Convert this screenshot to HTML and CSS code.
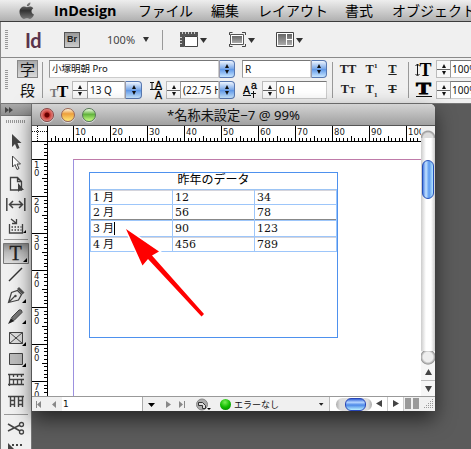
FILE: index.html
```html
<!DOCTYPE html>
<html lang="ja">
<head>
<meta charset="utf-8">
<title>InDesign</title>
<link rel="stylesheet" href="styles.css">
</head>
<body>
<div class="screen">
  <header class="menubar">
    <svg class="apple" width="16" height="18" viewBox="0 0 16 18"><defs><linearGradient id="ap" x2="0" y2="1"><stop stop-color="#888"/><stop offset=".5" stop-color="#333"/><stop offset="1" stop-color="#777"/></linearGradient></defs><path fill="url(#ap)" d="M8 5.2C10 4 13 4 14.3 6.2C11.7 7.8 12 11.2 15 12.5C14.2 14.8 12.5 17 11 17C9.800 17 9.300 16.300 8 16.300C6.700 16.300 6 17 5 17C2.800 17 .5 13 .5 10C.5 5.500 4.500 3.500 8 5.200ZM7.800 4.300C7.800 2 9.500.6 11.500.4C11.600 2.500 10 4.300 7.800 4.300Z"/></svg>
    <b class="app">InDesign</b>
    <span class="m1">ファイル</span><span class="m2">編集</span><span class="m3">レイアウト</span><span class="m4">書式</span><span class="m5">オブジェクト</span>
  </header>

  <div class="appbar">
    <i class="grip"></i>
    <b class="id">Id</b>
    <b class="br">Br</b>
    <span class="zoom">100%</span><i class="tri"></i>
    <i class="sep"></i>
    <svg class="view1" width="28" height="16" viewBox="181 32 28 16"><defs><linearGradient id="g" x2="0" y2="1"><stop stop-color="#666"/><stop offset="1" stop-color="#aaa"/></linearGradient></defs><path fill="#555" d="M181 32h18v4h-14v11h-4z"/><path stroke="#ccc" d="M183.500 32v2M186.500 32v2M189.500 32v2M192.500 32v2M195.500 32v2M181 37.500h2M181 40.500h2M181 43.500h2"/><path fill="#fff" stroke="#444" d="M185.500 36.500h13v10h-13z"/><path fill="#333" d="M201 38h7l-3.500 5z"/></svg>
    <svg class="view2" width="27" height="16" viewBox="230 32 27 16"><path fill="none" stroke="#444" d="M230.500 35v-2.500h3M243 32.500h3.500V35M230.500 44v2.500h3M243 46.500h3.500V44"/><path fill="#fff" stroke="#555" d="M231.500 34.500h13v10h-13z"/><path fill="url(#g)" d="M233 36h10v7h-10z"/><path fill="#333" d="M249 38h7l-3.500 5z"/></svg>
    <svg class="view3" width="28" height="16" viewBox="277 32 28 16"><path fill="#fff" stroke="#444" d="M277.500 32.500h17v14h-17z"/><path fill="url(#g)" d="M279 34h8v11h-8zM288 34h5v5h-5zM288 40h5v5h-5z"/><path fill="#333" d="M297 38h7l-3.500 5z"/></svg>
  </div>

  <div class="control">
    <i class="grip"></i>
    <div class="modes"><span class="on">字</span><span>段</span></div>
    <i class="sep"></i>
    <div class="fields left">
      <div class="row"><span class="input family">小塚明朝 Pro</span><i class="pop"></i></div>
      <div class="row">
        <svg class="ic" width="23" height="18" viewBox="49 82 23 18"><g font-family="Liberation Serif" font-weight="700"><text x="50" y="98" font-size="12" fill="#777">T</text><text x="57" y="98" font-size="17">T</text></g></svg>
        <i class="step"></i><span class="input size">13 Q</span><i class="pop"></i>
        <svg class="ic" width="24" height="18" viewBox="142 82 24 18"><g font-family="Liberation Sans" font-size="10.500" stroke="#000" stroke-width=".3"><text x="155" y="90">A</text><text x="155" y="100">A</text></g><path fill="none" stroke="#111" d="M150 83.500h4M150 90.500h12M152 83v8"/></svg>
        <i class="step"></i><span class="input lead">(22.75 H</span><i class="pop"></i>
      </div>
    </div>
    <div class="fields mid">
      <div class="row"><span class="input style">R</span><i class="pop"></i></div>
      <div class="row">
        <svg class="ic" width="20" height="18" viewBox="242 82 20 18"><g font-family="Liberation Sans" font-size="10.500" stroke="#000" stroke-width=".3"><text x="243" y="95">A</text><text x="251" y="90">a</text></g><path fill="none" stroke="#111" d="M243 96.500h8M253.500 92v7M251 94.500h5"/></svg>
        <i class="step"></i><span class="input shift">0 H</span>
      </div>
    </div>
    <i class="sep s2"></i>
    <div class="caps">
      <span>TT</span><span>T<sup>1</sup></span><span><u>T</u></span>
      <span>T<small>T</small></span><span>T<sub>1</sub></span><span><s>T</s></span>
    </div>
    <i class="sep s3"></i>
    <div class="fields right">
      <div class="row"><svg class="ic" width="22" height="18" viewBox="412 61 22 18"><text x="417.500" y="77" font-size="18" font-weight="700" font-family="Liberation Serif">T</text><path fill="none" stroke="#111" d="M415.500 65v11M413.500 67l2-2l2 2M413.500 75l2 2l2-2"/></svg><i class="step"></i><span class="input pct">100%</span></div>
      <div class="row"><svg class="ic" width="22" height="18" viewBox="412 82 22 18"><text x="414" y="95" font-size="16" font-weight="700" stroke="#000" stroke-width=".8" textLength="15" lengthAdjust="spacingAndGlyphs" font-family="Liberation Serif">T</text><path stroke="#111" d="M414 97.500h16"/></svg><i class="step"></i><span class="input pct">100%</span></div>
    </div>
  </div>

  <div class="work">
    <aside class="tools">
      <div class="head"><svg width="10" height="6" viewBox="0 0 10 6"><path fill="#444" d="M0 0l4 3l-4 3zM4 0l4 3l-4 3z"/></svg></div>
      <div class="dots"></div>
      <svg viewBox="1 132 29 21"><path fill="#444" d="M12 134v13l3-3l2 5l2.500-1l-2-5h4z"/></svg>
      <svg viewBox="1 153 29 21"><path fill="#fff" stroke="#444" d="M12.500 156v11l2.500-2.500l2 5l2-1l-2-4.500h3.500z"/></svg>
      <svg viewBox="1 174 29 21"><path fill="#f6f6f6" stroke="#444" stroke-width="1.300" d="M10.500 177.500h7l4 4v8.500h-11zM17.500 177.500v4h4"/><path fill="#444" d="M18 183v9l2-2h4z"/></svg>
      <svg viewBox="1 195 29 21"><path stroke="#444" stroke-width="1.500" fill="none" d="M6.800 198v13M24.800 198v13M10 204.500h12M13 201l-3.500 3.500l3.500 3.500M19 201l3.500 3.500l-3.500 3.500"/></svg>
      <svg viewBox="1 216 29 21"><path stroke="#444" stroke-width="1.300" fill="none" d="M9.500 224v9h13v-9M11 219l5 4M16.500 219v4.500h-4.500"/><path stroke="#444" stroke-width="1.500" stroke-dasharray="1.500 1.500" d="M11.500 227h10M11.500 230h10"/><path d="M26 230v3h-3z"/></svg>
      <i class="rule"></i>
      <svg class="active" viewBox="1 243 29 21"><path fill="url(#act)" stroke="#777" d="M3.500 243.500h25v20h-25z"/><defs><linearGradient id="act" x2="0" y2="1"><stop stop-color="#888"/><stop offset=".45" stop-color="#bbb"/><stop offset="1" stop-color="#ddd"/></linearGradient></defs><text x="9.500" y="260" font-family="Liberation Serif" font-size="20" fill="#222" stroke="#222" stroke-width=".3">T</text><path d="M27 258v4h-4z"/></svg>
      <svg viewBox="1 264 29 21"><path stroke="#333" stroke-width="1.400" d="M9 281l13-13"/></svg>
      <svg viewBox="1 285 29 21"><path fill="#eee" stroke="#444" stroke-width="1.200" d="M8.500 302.500l3-10l6-2l4 4l-3 5.500zM9 302l6-6"/><path fill="#555" d="M17 289l2-2l5.500 5.500l-2 2z"/><circle cx="15.500" cy="296" r="1.200" fill="#444"/><path d="M26 299v4h-4z"/></svg>
      <svg viewBox="1 306 29 21"><path fill="#777" stroke="#444" d="M11.500 317.500l7.500-7.500q3-1 3 2.500l-7.500 7.500z"/><path fill="#222" d="M11 318l3.500 3l-6.500 3z"/><path d="M26 320v4h-4z"/></svg>
      <svg viewBox="1 327 29 21"><path fill="#ddd" stroke="#444" d="M9.500 332.500h13v11h-13zM9.500 332.500l13 11M22.500 332.500l-13 11"/><path d="M26 342v4h-4z"/></svg>
      <svg viewBox="1 348 29 21"><path fill="#bbb" stroke="#444" d="M9.500 353.500h13v11h-13z"/><path d="M26 363v4h-4z"/></svg>
      <svg viewBox="1 369 29 21"><path stroke="#444" stroke-width="1.300" fill="none" d="M8 374.500h16M10 379.500h14M8 384.500h16M9.500 375v11M13.500 380v5M17.500 380v5M21.500 380v5M13.500 375v2M17.500 375v2M21.500 375v2"/></svg>
      <svg viewBox="1 390 29 21"><path stroke="#444" stroke-width="1.400" fill="none" d="M8 396.500h16M10.500 396v11M14.500 396v11M18.500 396v11M22.500 396v11M10.500 400.500h4M10.500 404.500h4M18.500 400.500h4M18.500 404.500h4"/></svg>
      <i class="rule"></i>
      <svg viewBox="1 418 29 21"><path stroke="#444" stroke-width="1.500" fill="none" d="M8 424l12 7M8 431l12-6"/><circle cx="21.500" cy="424.500" r="2" fill="none" stroke="#444" stroke-width="1.300"/><circle cx="21.500" cy="432" r="2" fill="none" stroke="#444" stroke-width="1.300"/></svg>
      <svg viewBox="1 439 29 21"><path fill="#444" d="M8 443v8h8z"/><path stroke="#444" stroke-width="2" stroke-dasharray="2 2" d="M12 445h12"/></svg>
    </aside>

    <main class="window">
      <div class="title"><i class="light red"></i><i class="light amber"></i><i class="light green"></i><span>*名称未設定−7 @ 99%</span></div>
      <div class="body">
        <div class="doc">
          <svg class="hruler" id="hruler" width="389" height="16" viewBox="32 126 389 16"><path stroke="#111" stroke-dasharray="1 1" d="M32 131.500h15M37.500 126v15"/><path stroke="#000" d="M47.500 126v15M32 141.500h389"/></svg>
          <div class="lower">
            <svg id="vruler" width="16" height="254" viewBox="32 142 16 254"><path stroke="#000" d="M47.500 142v254"/></svg>
            <div class="page">
              <div class="margins">
                <div class="frame">
                  <div class="caption">昨年のデータ</div>
                  <div class="table">
                    <span><em>1</em>月</span><span>12</span><span>34</span>
                    <span><em>2</em>月</span><span>56</span><span>78</span>
                    <span><em>3</em>月<i class="caret"></i></span><span>90</span><span>123</span>
                    <span><em>4</em>月</span><span>456</span><span>789</span>
                  </div>
                </div>
              </div>
              <svg class="pointer" width="84" height="92" viewBox="122 226 84 92"><path fill="#f00" stroke="#fff" stroke-width="3" paint-order="stroke" d="M126 229L159 251.500L152 255.500L204 314L201.500 316.500L148 259L142.500 265.500Z"/></svg>
            </div>
          </div>
        </div>
        <div class="vscroll"><i class="cap"></i><i class="thumb"></i><div class="arrows"><svg width="14" height="31" viewBox="421 365 14 31"><path fill="#444" d="M425 375l3.500-6l3.500 6zM425 386h7l-3.500 6z"/><path stroke="#bbb" d="M421 380.500h14"/></svg></div></div>
      </div>
      <div class="status">
        <svg width="30" height="14" viewBox="32 397 30 14"><path fill="#888" d="M36 401h1v7h-1zM41 401v7l-4-3.500zM56 401v7l-4-3.500z"/></svg>
        <span class="pageno">1</span>
        <svg width="76" height="14" viewBox="143 397 76 14"><path fill="#000" d="M148 403h7l-3.500 4z"/><path fill="#888" d="M166 401v7l5-3.500zM179 401v7l4-3.500zM184 401h1v7h-1z"/><circle cx="202" cy="404.500" r="5.500" fill="#aaa" stroke="#888"/><path fill="#ddd" stroke="#333" d="M198.500 402.500h4l3 3v3h-3v-3h-4z"/><path d="M207 408h4l-2 2z"/></svg>
        <i class="ok"></i><span class="msg">エラーなし</span>
        <svg class="drop" width="12" height="14" viewBox="318 397 12 14"><path fill="#222" d="M319 403h5l-2.500 3z"/></svg>
        <div class="hscroll"><i></i></div>
        <svg width="61" height="14" viewBox="374 397 61 14"><path fill="#fff" d="M374 397h29v14h-29z"/><path fill="#444" d="M382 400v7l-6-3.500zM393 400v7l6-3.500z"/><path stroke="#ccc" d="M387.500 397v14M403.500 397v14"/><path fill="#999" d="M405 398h6v11h-6zM413 398h6v11h-6z"/><path stroke="#999" stroke-dasharray="1 1" d="M432.500 399v10M430.500 401v8M428.500 403v6M426.500 405v4M424.500 407v2"/></svg>
      </div>
    </main>
  </div>
</div>
<script src="rulers.js"></script>
</body>
</html>
```
FILE: styles.css
```css
* { box-sizing: border-box; }
body { margin: 0; font-family: "DejaVu Sans", "Noto Sans CJK JP", sans-serif; color: #111; }
i, em { font-style: normal; }
svg { display: block; flex: none; }
.screen { width: 471px; height: 449px; overflow: hidden; background: #5b5b5b; }

.menubar { height: 22px; display: flex; align-items: center; padding-left: 19px; border-bottom: 1px solid #3c3c3c; background: linear-gradient(#eee, #b0b0b0); font: 14px/20px "Noto Sans CJK JP", sans-serif; white-space: nowrap; color: #000; }
.menubar span, .menubar b { flex: none; }
.menubar span { position: relative; top: -1px; }
.app { width: 103px; padding-left: 19px; font: bold 14.4px/20px "Open Sans"; }
.m1 { width: 73px; letter-spacing: -.3px; }
.m2 { width: 47px; }
.m3 { width: 87px; }
.m4 { width: 47px; }

.appbar { height: 36px; display: flex; align-items: center; padding: 0 0 0 4px; background: #f0f0f0; border-left: 1px solid #888; border-bottom: 1px solid #8a8a8a; }
.grip { width: 3px; height: 20px; flex: none; background: repeating-linear-gradient(#999 0 1px, #f0f0f0 1px 2px); }
.id { padding-left: 17px; box-sizing: content-box; width: 17px; color: #5a344c; font: bold 20px/20px Lato; letter-spacing: -.5px; }
.br { width: 16px; height: 16px; margin-left: 22px; border: 1px solid #555; background: linear-gradient(#999, #ccc); font: bold 9px/13px "Liberation Sans"; text-align: center; color: #222; }
.zoom { margin-left: 27px; width: 36px; font: 11px/16px "Noto Sans"; color: #444; }
.tri { border: 3.5px solid transparent; border-top: 5px solid #333; border-bottom: 0; }
.sep { width: 1px; height: 20px; background: #999; margin-left: 13px; flex: none; }
.view1 { margin-left: 17px; }
.view2 { margin-left: 21px; }
.view3 { margin-left: 20px; }

.control { height: 46px; display: flex; padding: 2px 0 0 4px; background: #f0f0f0; border-left: 1px solid #888; border-bottom: 1px solid #777; }
.control > .grip { margin-top: 10px; }
.modes { width: 21px; flex: none; margin-left: 9px; font: 15px/17px "Noto Sans CJK JP"; text-align: center; }
.modes span { display: block; height: 19px; }
.modes .on { height: 18px; border: 1px solid #888; background: linear-gradient(#aaa, #d8d8d8); line-height: 15px; margin-bottom: 3px; }
.control .sep { height: 36px; margin: 2px 0 0 4px; }
.control .s2 { margin-left: 5px; }
.control .s3 { margin-left: 3px; }
.fields { display: grid; grid-template-rows: 18px 18px; row-gap: 3px; flex: none; }
.left { margin-left: 6px; }
.mid { margin-left: 7px; }
.right { margin-left: 5px; }
.row { display: flex; }
.ic { overflow: visible; }
.input { height: 18px; background: #fff; border: 1px solid #ccc; border-top-color: #777; border-left-color: #999; padding-left: 2px; overflow: hidden; white-space: nowrap; font: 10px/16px "Noto Sans", "Noto Sans CJK JP", sans-serif; flex: none; }
.family { width: 170px; font-size: 9.5px; }
.style { width: 69px; }
.size { width: 38px; }
.lead { width: 39px; }
.shift { width: 51px; }
.pct { width: 30px; padding-left: 1px; }
.pop { width: 16px; height: 18px; flex: none; border: 1px solid #5878b0; border-left-color: #99a; border-radius: 0 4px 4px 0; background: linear-gradient(#eef5ff, #7aa8e8 48%, #5f98e8 52%, #c8e6ff); display: flex; flex-direction: column; align-items: center; justify-content: center; gap: 2px; }
.size + .pop { width: 17px; }
.pop::before, .step::before { content: ""; border: 2.5px solid transparent; border-bottom: 4px solid #111; border-top: 0; }
.pop::after, .step::after { content: ""; border: 2.5px solid transparent; border-top: 4px solid #111; border-bottom: 0; }
.step { width: 14px; height: 18px; flex: none; border: 1px solid #bbb; border-right: 0; background: linear-gradient(#f8f8f8 8px, #666 8px 9px, #f8f8f8 9px); display: flex; flex-direction: column; align-items: center; justify-content: center; gap: 3px; }
.row .ic + .step:has(+ .size) { width: 15px; }
.caps { margin-left: 2px; width: 70px; flex: none; display: grid; grid-template: 20px 20px / 26px 21px 21px; font: bold 12.5px/18px "Liberation Serif"; text-align: center; color: #222; }
.caps sup, .caps sub { font-size: 7px; line-height: 0; }
.caps small { font-size: 9px; }

.work { display: flex; height: 345px; }
.tools { width: 32px; flex: none; background: #f0f0f0; border-left: 1px solid #777; border-right: 1px solid #777; overflow: hidden; }
.tools > svg { width: 29px; height: 21px; }
.head { height: 12px; padding: 3px 0 0 4px; background: linear-gradient(#aaa, #8f8f8f); border-bottom: 1px solid #777; }
.dots { margin: 4px 0 9px 5px; width: 20px; height: 3px; background: repeating-linear-gradient(90deg, #999 0 1px, #f0f0f0 1px 2px); }
.rule { display: block; height: 1px; background: #999; margin: 2px 3px 3px; }
.active + svg ~ .rule { margin: 3px; }

.window { width: 403px; height: 307px; flex: none; box-shadow: 0 8px 20px #0009; background: #fff; border-radius: 0 5px 0 0; }
.title { height: 22px; display: flex; align-items: center; padding-left: 8px; border-radius: 0 5px 0 0; background: linear-gradient(#d4d4d4, #a0a0a0); border-bottom: 1px solid #555; }
.title span { margin-left: 64px; font: 13.2px/20px "Noto Sans", "Noto Sans CJK JP"; white-space: nowrap; }
.light { width: 14px; height: 14px; margin-right: 7px; border-radius: 50%; border: 1px solid #844; box-shadow: 0 1px #ddd; }
.red { background: radial-gradient(circle at 50% 50%, #600 0 2px, #c83b36 3px, #f0a09a 7px); }
.amber { border-color: #965; background: linear-gradient(#fff4df, #ed9f3b 40%, #ffe979); }
.green { border-color: #575; background: linear-gradient(#f2ffe6, #62b33c 45%, #c9ff87); }
.body { display: flex; height: 270px; }
.doc { width: 389px; }
.lower { display: flex; }
.page { width: 373px; height: 254px; position: relative; overflow: hidden; padding: 17px 0 0 25px; }
.margins { height: 237px; border-left: 1px solid #9c91df; border-top: 1px solid #bf7ba9; padding: 12px 0 0 15px; }
.frame { width: 249px; height: 166px; border: 1px solid #4e91ee; }
.caption { height: 16px; text-align: center; font: 12px/11px "Noto Sans CJK JP"; color: #000; }
.table { height: 63px; display: grid; grid-template: 15px 16px 16px 15px / 82px 82px 83px; border-top: 1px solid #9cc4f4; font: 11px/15px "DejaVu Serif", "Noto Sans CJK JP"; color: #111; }
.table span { border-left: 1px solid #9dc6fa; border-bottom: 1px solid #9dc6fa; padding-left: 2px; white-space: nowrap; display: flex; height: 100%; }
.table span:nth-child(-n+3), .table span:nth-child(n+10) { box-shadow: inset 0 1px #d4d4dc; }
.table span:nth-child(n+4):nth-child(-n+6) { box-shadow: inset 0 -1px #888; }
.table span:nth-child(3n) { border-right: 1px solid #9dc6fa; }
.table em { width: 10px; }
.caret { width: 1px; height: 13px; background: #000; margin: 1px 0 0; }
.pointer { position: absolute; left: 74px; top: 84px; }

.vscroll { width: 14px; display: flex; flex-direction: column; background: linear-gradient(90deg, #ccc, #fff 5px 10px, #ccc); }
.cap { height: 12px; margin-bottom: 22px; background: radial-gradient(ellipse 8px 8px at 50% 100%, #ddd 60%, #999 85%, #f0f0f0 100%); }
.thumb { width: 12px; height: 39px; margin: 0 1px; border-radius: 6px; border: 1px solid #2450b8; background: linear-gradient(90deg, #4c7ee3, #c4e3ff 30%, #5b99ef 60%, #b2e3ff); }
.arrows { height: 45px; margin-top: auto; padding-top: 14px; background: radial-gradient(ellipse 8px 8px at 50% 6px, #eee 60%, #999 90%, #f6f6f6 100%); }
.arrows svg { background: #f6f6f6; }
.status { height: 15px; display: flex; align-items: center; background: #f0f0f0; border-top: 1px solid #999; }
.pageno { width: 81px; height: 14px; padding-left: 1px; background: #fff; border-right: 1px solid #aaa; font: 9px/14px "DejaVu Sans"; }
.ok { width: 11px; height: 11px; margin-left: 1px; border-radius: 50%; background: radial-gradient(circle at 45% 30%, #7e5, #1b0 50%, #070); }
.msg { width: 87px; padding-left: 3px; font: 9px/13px "Noto Sans CJK JP"; white-space: nowrap; }
.drop { border-right: 1px solid #bbb; }
.hscroll { width: 44px; height: 14px; padding-left: 6px; background: #fff; display: flex; align-items: center; }
.hscroll::before { content: ""; position: absolute; width: 36px; height: 13px; border-radius: 7px; background: linear-gradient(90deg, #aaa, #ddd 4px 32px, #aaa); }
.hscroll i { position: relative; width: 21px; height: 13px; margin-left: 9px; border-radius: 6px; border: 1px solid #2846b8; background: linear-gradient(#3464d8, #b4d4ff 30%, #4c88e8 55%, #b8f0ff); }
.num { font: 8.5px "DejaVu Sans"; fill: #222; }
```
FILE: rulers.js
```js
// Ruler ticks: one every 3.7px, numbered every ten units.
const NS = 'http://www.w3.org/2000/svg';
const add = (svg, tag, attrs, text) => {
  const el = document.createElementNS(NS, tag);
  for (const k in attrs) el.setAttribute(k, attrs[k]);
  if (text !== undefined) el.textContent = text;
  svg.appendChild(el);
};
const h = document.getElementById('hruler');
const v = document.getElementById('vruler');
for (let n = 3; n <= 103; n++) {
  const x = 73 + Math.round((n - 10) * 3.7);
  const len = n % 10 === 0 ? 15 : n % 5 === 0 ? 5 : 3;
  if (x > 47) add(h, 'rect', { x, y: 141 - len, width: 1, height: len, fill: '#000' });
  if (n % 10 === 0) add(h, 'text', { x: x + 2, y: 135, class: 'num' }, n);
}
for (let n = 6; n <= 73; n++) {
  const y = 159 + Math.round((n - 10) * 3.7);
  const len = n % 10 === 0 ? 15 : n % 5 === 0 ? 5 : 3;
  add(v, 'rect', { x: 47 - len, y, width: len, height: 1, fill: '#000' });
  if (n % 10 === 0) {
    add(v, 'text', { x: 34, y: y + 9, class: 'num' }, String(n)[0]);
    add(v, 'text', { x: 34, y: y + 17, class: 'num' }, '0');
  }
}
```
